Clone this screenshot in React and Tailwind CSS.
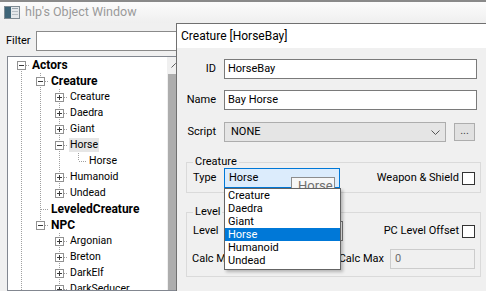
import React from 'react';

const tree = [
  {
    label: 'Actors', bold: true, open: true, children: [
      {
        label: 'Creature', bold: true, open: true, children: [
          { label: 'Creature', closed: true },
          { label: 'Daedra', closed: true },
          { label: 'Giant', closed: true },
          { label: 'Horse', open: true, selected: true, children: [{ label: 'Horse' }] },
          { label: 'Humanoid', closed: true },
          { label: 'Undead', closed: true },
        ],
      },
      { label: 'LeveledCreature', bold: true },
      {
        label: 'NPC', bold: true, open: true, children: [
          { label: 'Argonian', closed: true },
          { label: 'Breton', closed: true },
          { label: 'DarkElf', closed: true },
          { label: 'DarkSeducer', closed: true },
          { label: 'GoldenSaint', closed: true },
        ],
      },
    ],
  },
  { label: 'Items', bold: true, closed: true },
];

function flatten(nodes, depth = 0, trail = [], out = []) {
  nodes.forEach((n, i) => {
    const last = i === nodes.length - 1;
    out.push({ ...n, depth, trail, last, first: depth === 0 && i === 0 });
    if (n.open && n.children) flatten(n.children, depth + 1, [...trail, !last], out);
  });
  return out;
}

const rows = flatten(tree);

function Connector({ cross, up, down, right, box }) {
  return (
    <svg width="19" height="16" className="block shrink-0">
      <g stroke="#a0a0a0" strokeDasharray="1 1">
        {cross && <line x1="9.5" y1="0" x2="9.5" y2="16" />}
        {up && <line x1="9.5" y1="0" x2="9.5" y2="8" />}
        {down && <line x1="9.5" y1="8" x2="9.5" y2="16" />}
        {right && <line x1="10" y1="8.5" x2="18" y2="8.5" />}
      </g>
      {box && (
        <g>
          <rect x="5.5" y="4.5" width="8" height="8" fill="#fff" stroke="#919191" />
          <line x1="7" y1="8.5" x2="12" y2="8.5" stroke="#3a3a3a" />
          {box === 'plus' && <line x1="9.5" y1="6" x2="9.5" y2="11" stroke="#3a3a3a" />}
        </g>
      )}
    </svg>
  );
}

const TreeRow = ({ row }) => (
  <div className="flex items-center h-[16px] whitespace-nowrap">
    {row.trail.map((hasNext, k) => (
      <Connector key={k} cross={hasNext} />
    ))}
    <Connector
      up={!row.first}
      down={!row.last}
      right
      box={row.open ? 'minus' : row.closed ? 'plus' : null}
    />
    <span
      className={
        'px-[1px] leading-[14px] ' +
        (row.bold ? 'text-[12px] font-bold ' : 'text-[10.5px] ') +
        (row.selected ? 'bg-[#e6e6e6]' : '')
      }
    >
      {row.label}
    </span>
  </div>
);

const Checkbox = () => (
  <div className="w-[13px] h-[13px] border border-[#333333] bg-white shrink-0" />
);

const WindowIcon = () => (
  <svg width="16" height="13" viewBox="0 0 16 13" className="block">
    <rect x="0.5" y="0.5" width="15" height="12" fill="#e4e8eb" stroke="#7f8b93" />
    <rect x="1" y="1" width="6" height="11" fill="#3f6578" />
    <rect x="8" y="2" width="6" height="1" fill="#9aa5ad" />
    <rect x="8" y="5" width="6" height="1" fill="#b6bec4" />
    <rect x="8" y="8" width="6" height="1" fill="#b6bec4" />
  </svg>
);

export default function App() {
  return (
    <div className="relative w-[486px] h-[291px] overflow-hidden bg-[#f0f0f0] text-black font-[family-name:Roboto,Arial,sans-serif]">
      {/* object window behind */}
      <div className="flex flex-col h-full">
        <div className="h-[23px] shrink-0 border-t-2 border-[#8a8a8a] bg-gradient-to-b from-[#fcfcfc] to-[#efefef] flex items-center pl-[4px] gap-[5px]">
          <WindowIcon />
          <span className="text-[12.5px] text-[#9a9a9a]">hlp's Object Window</span>
        </div>
        <div className="flex items-center h-[20px] mt-[8px] pl-[6px] shrink-0">
          <span className="w-[30px] text-[11px]">Filter</span>
          <div className="w-[300px] h-[20px] border border-[#8a8a8a] bg-white" />
        </div>
        <div className="flex ml-[7px] mt-[5px] w-[178px] flex-1 border border-[#828790] bg-white overflow-hidden">
          <div className="w-[159px] pl-[4px] overflow-hidden">
            {rows.map((r, i) => (
              <TreeRow key={i} row={r} />
            ))}
          </div>
          <div className="w-[17px] flex flex-col bg-[#f0f0f0]">
            <div className="h-[17px] flex items-center justify-center">
              <svg width="9" height="5" viewBox="0 0 9 5">
                <polyline points="0.5,4.5 4.5,0.5 8.5,4.5" fill="none" stroke="#606060" />
              </svg>
            </div>
            <div className="flex-1 bg-[#adadad] mx-[1px]" />
          </div>
        </div>
      </div>

      {/* creature dialog */}
      <div className="absolute left-[176px] top-[23px] w-[330px] h-[300px] border border-[#707070] bg-[#f0f0f0] flex flex-col">
        <div className="h-[24px] shrink-0 bg-white flex items-center pl-[4px] text-[12px]">
          Creature [HorseBay]
        </div>
        <div className="pt-[11px] text-[11px]">
          <div className="flex items-center h-[20px]">
            <span className="w-[39px] text-right">ID</span>
            <div className="ml-[8px] w-[253px] h-[20px] border border-[#7a7a7a] bg-white flex items-center pl-[3px]">
              HorseBay
            </div>
          </div>
          <div className="flex items-center h-[20px] mt-[11px]">
            <span className="w-[39px] text-right">Name</span>
            <div className="ml-[8px] w-[253px] h-[20px] border border-[#7a7a7a] bg-white flex items-center pl-[3px]">
              Bay Horse
            </div>
          </div>
          <div className="flex items-center h-[20px] mt-[12px]">
            <span className="w-[39px] text-right">Script</span>
            <div className="ml-[8px] w-[222px] h-[20px] border border-[#adadad] bg-[#e5e5e5] flex items-center pl-[6px] pr-[5px]">
              <span className="flex-1">NONE</span>
              <svg width="9" height="5" viewBox="0 0 9 5">
                <polyline points="0.5,0.5 4.5,4.5 8.5,0.5" fill="none" stroke="#555" />
              </svg>
            </div>
            <div className="ml-[8px] w-[21px] h-[18px] border border-[#adadad] bg-[#e1e1e1] flex items-center justify-center text-[#444] leading-none pb-[3px]">
              ...
            </div>
          </div>

          <fieldset className="ml-[9px] mt-[14px] w-[295px] border border-[#dadada] pb-[4px]">
            <legend className="ml-[6px] px-[2px] leading-[12px]">Creature</legend>
            <div className="flex items-center h-[20px] pl-[6px] pr-[5px]">
              <span className="w-[31px]">Type</span>
              <div className="w-[116px] h-[20px] border border-[#0078d7] bg-[#dcecfc] flex items-center pl-[4px]">
                Horse
              </div>
              <span className="ml-auto mr-[3px]">Weapon &amp; Shield</span>
              <Checkbox />
            </div>
          </fieldset>

          <fieldset className="ml-[9px] mt-[13px] w-[295px] border border-[#dadada] pt-[3px] pb-[7px]">
            <legend className="ml-[6px] px-[2px] leading-[12px]">Level</legend>
            <div className="flex items-center h-[20px] pl-[6px] pr-[5px]">
              <span className="w-[31px]">Level</span>
              <div className="w-[119px] h-[20px] border border-[#7a7a7a] bg-white" />
              <span className="ml-auto mr-[3px]">PC Level Offset</span>
              <Checkbox />
            </div>
            <div className="flex items-center h-[20px] mt-[8px] pl-[5px] pr-[5px]">
              <span className="whitespace-nowrap">Calc Min</span>
              <div className="ml-[6px] w-[86px] h-[20px] border border-[#cccccc] bg-[#f0f0f0]" />
              <span className="ml-[12px]">Calc Max</span>
              <div className="ml-auto w-[85px] h-[20px] border border-[#cccccc] bg-[#f0f0f0] flex items-center pl-[4px] text-[#6d6d6d]">
                0
              </div>
            </div>
          </fieldset>
        </div>
      </div>

      {/* tooltip over the type combo */}
      <div className="absolute left-[291px] top-[177px] w-[44px] h-[18px] border border-[#8d8d8d] bg-[#f7f7f7] text-[13px] text-[#707070] pl-[6px] leading-[16px]">
        Horse
      </div>

      {/* open drop list */}
      <div className="absolute left-[224px] top-[188px] w-[117px] h-[82px] border border-[#646464] bg-white shadow-[2px_2px_3px_rgba(0,0,0,0.25)] text-[11px]">
        {['Creature', 'Daedra', 'Giant', 'Horse', 'Humanoid', 'Undead'].map((t) => (
          <div
            key={t}
            className={
              'h-[13px] leading-[13px] pl-[3px] ' +
              (t === 'Horse' ? 'bg-[#0078d7] text-white' : '')
            }
          >
            {t}
          </div>
        ))}
      </div>
    </div>
  );
}
